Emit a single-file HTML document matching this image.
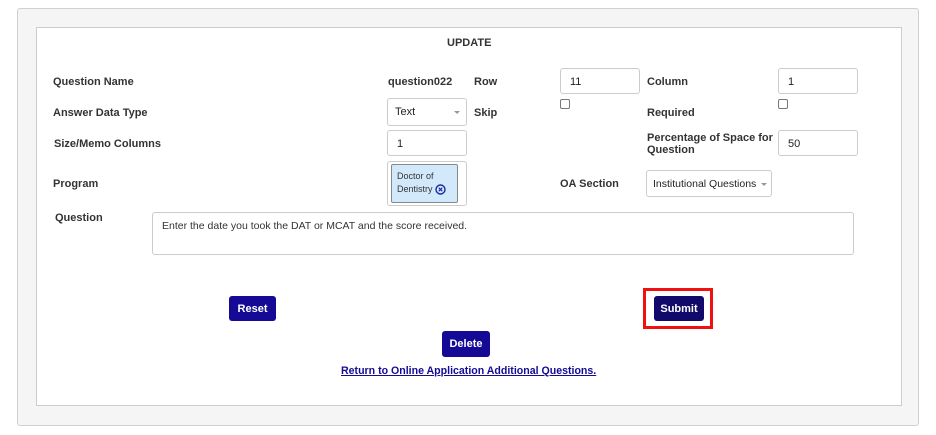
<!DOCTYPE html>
<html><head><style>
*{box-sizing:border-box;margin:0;padding:0}
body{width:936px;height:435px;background:#fff;font-family:"Liberation Sans",sans-serif;font-size:11px;color:#222;position:relative;overflow:hidden}
.a{position:absolute}
.outer{left:17px;top:8px;width:902px;height:418px;background:#f5f5f5;border:1px solid #d0d0d0;border-radius:3px}
.inner{left:36px;top:27px;width:866px;height:379px;background:#fff;border:1px solid #ccc}
.l{font-weight:bold;color:#333}
.in{border:1px solid #ccc;border-radius:3px;background:#fff;padding:0 9px;line-height:26px;height:26px;color:#222}
.cb{width:10px;height:10px;border:1px solid #777;border-radius:2px;background:#fff}
.btn{background:#140a96;color:#fff;font-weight:bold;border-radius:3px;text-align:center;line-height:27px;height:25px}
.caret{position:absolute;right:6px;top:12px;border-left:3px solid transparent;border-right:3px solid transparent;border-top:3px solid #999}
</style></head><body>
<div class="a outer"></div>
<div class="a inner"></div>
<div class="a l" style="left:447px;top:37px">UPDATE</div>

<div class="a l" style="left:53px;top:76px">Question Name</div>
<div class="a l" style="left:388px;top:76px">question022</div>
<div class="a l" style="left:474px;top:76px">Row</div>
<div class="a in" style="left:560px;top:68px;width:80px">11</div>
<div class="a l" style="left:647px;top:76px">Column</div>
<div class="a in" style="left:778px;top:68px;width:80px">1</div>

<div class="a l" style="left:53px;top:107px">Answer Data Type</div>
<div class="a in" style="left:387px;top:98px;width:80px;height:28px;line-height:26px;padding-left:7px">Text<span class="caret"></span></div>
<div class="a l" style="left:474px;top:107px">Skip</div>
<div class="a cb" style="left:560px;top:99px"></div>
<div class="a l" style="left:647px;top:107px">Required</div>
<div class="a cb" style="left:778px;top:99px"></div>

<div class="a l" style="left:54px;top:138px">Size/Memo Columns</div>
<div class="a in" style="left:387px;top:130px;width:80px">1</div>
<div class="a l" style="left:647px;top:132px;line-height:12px">Percentage of Space for<br>Question</div>
<div class="a in" style="left:778px;top:130px;width:80px">50</div>

<div class="a l" style="left:53px;top:178px">Program</div>
<div class="a" style="left:387px;top:161px;width:80px;height:45px;border:1px solid #ccc;border-radius:3px"></div>
<div class="a" style="left:391px;top:164px;width:67px;height:39px;background:#d2e8fb;border:1px solid #888;border-radius:2px;font-size:9px;color:#333;padding:5px 0 0 5px;line-height:13px">Doctor of<br>Dentistry <svg width="11" height="11" viewBox="0 0 11 11" style="vertical-align:-3px"><circle cx="5.5" cy="5.5" r="4.5" fill="none" stroke="#1a2aa0" stroke-width="1.4"/><path d="M3.8 3.8L7.2 7.2M7.2 3.8L3.8 7.2" stroke="#1a2aa0" stroke-width="1.2"/></svg></div>
<div class="a l" style="left:560px;top:178px">OA Section</div>
<div class="a in" style="left:646px;top:170px;width:126px;height:27px;padding-left:6px;line-height:26px;font-size:10.5px">Institutional Questions<span class="caret" style="right:4px"></span></div>

<div class="a l" style="left:55px;top:212px">Question</div>
<div class="a" style="left:152px;top:212px;width:702px;height:43px;border:1px solid #ccc;border-radius:3px;padding:7px 9px;color:#333;font-size:10.5px">Enter the date you took the DAT or MCAT and the score received.</div>

<div class="a btn" style="left:229px;top:296px;width:47px">Reset</div>
<div class="a" style="left:643px;top:288px;width:70px;height:41px;border:3px solid #f01010"></div>
<div class="a btn" style="left:654px;top:296px;width:50px;background:#120a6a">Submit</div>
<div class="a btn" style="left:442px;top:331px;width:48px;height:26px;line-height:27px">Delete</div>
<div class="a" style="left:341px;top:365px;color:#140a96;font-weight:bold;text-decoration:underline;font-size:10.6px">Return to Online Application Additional Questions.</div>
</body></html>
